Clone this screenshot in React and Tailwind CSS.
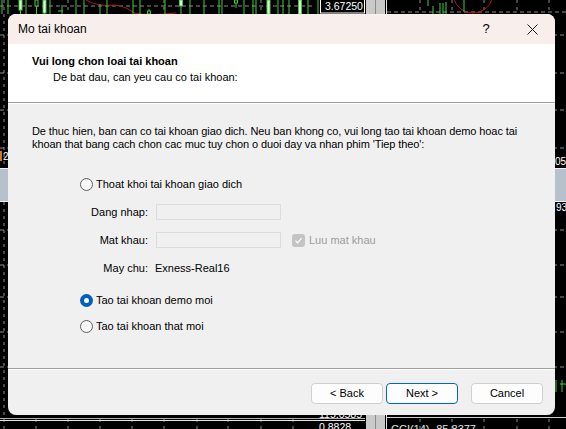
import React from "react";

// Candles peeking out above the dialog: [x, y1, y2, body?]
const TOP_CANDLES = [
  [2, 0, 14], [8, 0, 14], [20.5, 0, 14, "w", 0, 10], [26, 0, 14],
  [36.5, 0, 14, "h", 0, 6], [44.5, 0, 14, "w", 0, 13], [50, 0, 14],
  [62, 5, 14], [76, 0, 14], [84, 0, 14], [100, 4, 14], [107, 0, 14],
  [133, 0, 14], [140, 0, 14], [149, 9, 14, "h", 11, 14], [165, 0, 14],
  [181, 0, 14, "w", 0, 6], [190, 0, 14], [204, 0, 14], [219, 0, 14],
  [222, 0, 14], [236, 0, 8, "h", 0, 3], [244, 0, 14], [253, 0, 14],
  [256, 0, 14], [268.5, 0, 14, "w", 0, 14], [278, 0, 14], [283, 0, 14],
  [289, 0, 14], [300, 0, 14, "w", 0, 14], [308, 0, 14], [318, 0, 14],
  [428, 0, 6], [433, 6, 14], [440, 3, 14], [443, 3, 14], [446, 2, 14], [464, 0, 12],
];

const H_DASHES = [35, 73, 110, 148, 230, 265, 297, 332, 367];

function ChartBackdrop() {
  const green = "#3ccf3c";
  const grid = "#8c8c8c";
  return (
    <svg className="absolute inset-0" width="566" height="429" viewBox="0 0 566 429">
      <rect width="566" height="429" fill="#000" />
      {/* grid */}
      <line x1="0" y1="6" x2="314" y2="6" stroke={grid} strokeDasharray="4 3" />
      <line x1="387" y1="12" x2="566" y2="12" stroke={grid} strokeDasharray="4 3" />
      {H_DASHES.map((y) => (
        <line key={y} x1="0" y1={y} x2="566" y2={y} stroke={grid} strokeDasharray="4 3" />
      ))}
      {[4, 68, 164, 261, 420, 452, 484, 517, 549].map((x) => (
        <line key={x} x1={x} y1="0" x2={x} y2="168" stroke={grid} strokeDasharray="3 4" />
      ))}
      {[4, 36, 68, 100, 132, 164, 197, 228, 261, 293, 420, 452, 484, 517, 549].map((x) => (
        <line key={"b" + x} x1={x} y1="202" x2={x} y2="429" stroke={grid} strokeDasharray="3 4" />
      ))}
      {/* red indicator curves */}
      <path d="M86 0 Q98 7 114 5 Q126 6 134 13 Q150 16 176 13" stroke="#b01818" fill="none" />
      <circle cx="473" cy="-7" r="20" stroke="#b01818" fill="none" />
      {/* candles */}
      {TOP_CANDLES.map(([x, y1, y2, kind, b1, b2], i) => (
        <g key={i}>
          <line x1={x} y1={y1} x2={x} y2={y2} stroke={green} />
          {kind === "w" && <rect x={x - 1.5} y={b1} width="3" height={b2 - b1} fill="#e8ffe8" stroke={green} />}
          {kind === "h" && <rect x={x - 1.5} y={b1} width="3" height={b2 - b1} fill="#000" stroke={green} />}
        </g>
      ))}
      <line x1="58" y1="11" x2="63" y2="11" stroke={green} />
      <path d="M556 380 v12 M560 384 h6 M562 380 v12" stroke={green} />
      {/* price axis + scrollbar */}
      <rect x="320.5" y="-2" width="44" height="15" fill="#000" stroke="#fff" />
      <text x="325" y="10" fill="#fff" fontSize="10.5" fontFamily="Liberation Sans, sans-serif">3.67250</text>
      <rect x="366" y="0" width="19" height="429" fill="#c9c9c9" />
      <line x1="375.5" y1="0" x2="375.5" y2="429" stroke="#8a8a8a" />
      <line x1="386.5" y1="0" x2="386.5" y2="429" stroke="#e0e0e0" />
      {/* separator between chart windows */}
      <rect x="0" y="168" width="566" height="34" fill="#b6c1cc" />
      <line x1="0" y1="168.5" x2="566" y2="168.5" stroke="#eef2f6" />
      <line x1="0" y1="201.5" x2="566" y2="201.5" stroke="#eef2f6" />
      <rect x="0" y="151" width="2" height="10" fill="#d07a1a" />
      <text x="3" y="160" fill="#fff" fontSize="10" fontFamily="Liberation Sans, sans-serif">2</text>
      <text x="555" y="165" fill="#fff" fontSize="10" fontFamily="Liberation Sans, sans-serif">05</text>
      <text x="556" y="211" fill="#fff" fontSize="10" fontFamily="Liberation Sans, sans-serif">93</text>
      {/* bottom indicator window */}
      <line x1="0" y1="418.5" x2="365" y2="418.5" stroke="#b0b0b0" />
      <line x1="0" y1="420.5" x2="365" y2="420.5" stroke="#e6e6e6" />
      <line x1="387" y1="417.5" x2="566" y2="417.5" stroke="#d0d0d0" />
      <text x="319" y="418" fill="#fff" fontSize="10.5" fontFamily="Liberation Sans, sans-serif">115.0585</text>
      <text x="319" y="431" fill="#fff" fontSize="10.5" fontFamily="Liberation Sans, sans-serif">0.8828</text>
      <text x="391" y="433" fill="#e0e0e0" fontSize="11" fontFamily="Liberation Sans, sans-serif">CCI(14) -85.8377</text>
    </svg>
  );
}

function Radio({ checked, label }) {
  return (
    <div className="flex h-[16px] items-center gap-[3px]">
      {checked ? (
        <span className="flex h-[13px] w-[13px] items-center justify-center rounded-full bg-[#005fb8]">
          <span className="h-[5px] w-[5px] rounded-full bg-white" />
        </span>
      ) : (
        <span className="h-[13px] w-[13px] rounded-full border border-[#5d5d5d] bg-[#f7f7f7]" />
      )}
      <span>{label}</span>
    </div>
  );
}

function Field({ label, children }) {
  return (
    <div className="flex h-[16px] items-center">
      <span className="w-[68px] text-right">{label}</span>
      <div className="ml-[8px] flex items-center">{children}</div>
    </div>
  );
}

function Button({ children, primary }) {
  return (
    <button
      className={
        "flex h-[21px] w-[72px] items-center justify-center rounded-[4px] border bg-[#fdfdfd] text-[11px] text-black " +
        (primary ? "border-[#0067c0]" : "border-[#d0d0d0]")
      }
    >
      {children}
    </button>
  );
}

export default function App() {
  return (
    <div className="relative h-[429px] w-[566px] overflow-hidden bg-black font-['Liberation_Sans',Arial,sans-serif] text-[11px] text-black">
      <ChartBackdrop />

      <div className="absolute left-[8px] top-[14px] flex h-[401px] w-[547px] flex-col overflow-hidden rounded-[8px] bg-[#f0f0f0]">
        {/* title bar */}
        <div className="flex h-[30px] items-center bg-[#f8efec]">
          <span className="flex-1 pl-[10px] text-[12px]">Mo tai khoan</span>
          <span className="flex h-full w-[46px] items-center justify-center text-[13px]">?</span>
          <span className="flex h-full w-[46px] items-center justify-center">
            <svg width="11" height="11" viewBox="0 0 11 11">
              <path d="M0.5 0.5 L10.5 10.5 M10.5 0.5 L0.5 10.5" stroke="#1a1a1a" strokeWidth="1" />
            </svg>
          </span>
        </div>

        {/* header */}
        <div className="h-[58px] bg-white pl-[24px] pt-[10px] leading-[14px]">
          <div className="font-bold">Vui long chon loai tai khoan</div>
          <div className="ml-[21px] mt-[2px]">De bat dau, can yeu cau co tai khoan:</div>
        </div>
        <div className="h-px bg-[#a0a0a0]" />
        <div className="h-px bg-white" />

        {/* body */}
        <div className="flex-1 pt-[21px]">
          <p className="pl-[24px] leading-[13px] tracking-[-0.09px]">
            De thuc hien, ban can co tai khoan giao dich. Neu ban khong co, vui long tao tai khoan demo hoac tai
            <br />
            khoan that bang cach chon cac muc tuy chon o duoi day va nhan phim 'Tiep theo':
          </p>

          <div className="mt-[25px] flex flex-col pl-[72px]">
            <Radio label="Thoat khoi tai khoan giao dich" />
            <div className="mt-[12px]">
              <Field label="Dang nhap:">
                <span className="h-[16px] w-[125px] border border-[#dcdcdc] bg-[#f0f0f0]" />
              </Field>
            </div>
            <div className="mt-[12px]">
              <Field label="Mat khau:">
                <span className="h-[16px] w-[125px] border border-[#dcdcdc] bg-[#f0f0f0]" />
                <span className="ml-[11px] flex h-[13px] w-[13px] items-center justify-center rounded-[3px] bg-[#c4c4c4]">
                  <svg width="9" height="9" viewBox="0 0 9 9">
                    <path d="M1.5 4.8 L3.6 6.8 L7.6 2.2" stroke="#fff" strokeWidth="1.2" fill="none" />
                  </svg>
                </span>
                <span className="ml-[4px] text-[#9d9d9d]">Luu mat khau</span>
              </Field>
            </div>
            <div className="mt-[12px] flex h-[16px] items-center">
              <span className="w-[68px] text-right">May chu:</span>
              <span className="ml-[7px]">Exness-Real16</span>
            </div>
            <div className="mt-[16px]">
              <Radio checked label="Tao tai khoan demo moi" />
            </div>
            <div className="mt-[10px]">
              <Radio label="Tao tai khoan that moi" />
            </div>
          </div>
        </div>

        <div className="h-px bg-[#a0a0a0]" />
        <div className="h-px bg-white" />

        {/* buttons */}
        <div className="flex h-[45px] justify-end pr-[12px] pt-[13px]">
          <Button>&lt; Back</Button>
          <div className="ml-[3px]">
            <Button primary>Next &gt;</Button>
          </div>
          <div className="ml-[13px]">
            <Button>Cancel</Button>
          </div>
        </div>
      </div>
    </div>
  );
}
